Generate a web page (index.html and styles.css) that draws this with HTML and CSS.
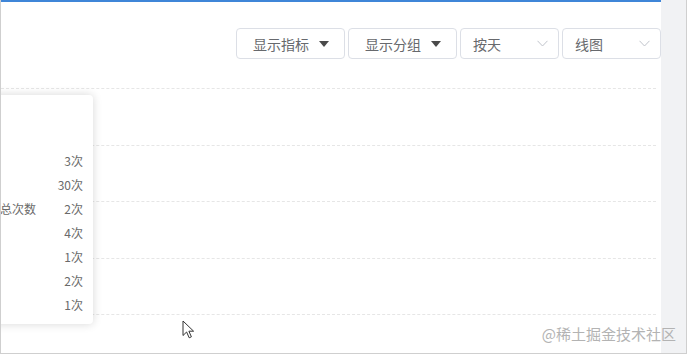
FILE: index.html
```html
<!DOCTYPE html>
<html lang="zh-CN">
  <head>
    <meta charset="UTF-8" />
    <meta name="viewport" content="width=device-width, initial-scale=1.0" />
    <title>统计图表</title>
    <link rel="stylesheet" href="styles.css">
  </head>
  <body>
    <div class="frame">
      <div class="panel">
        <div class="toolbar">
          <button class="drop-btn">
            显示指标
            <span class="caret"></span>
          </button>
          <button class="drop-btn">
            显示分组
            <span class="caret"></span>
          </button>
          <div class="select">
            <span>按天</span>
            <svg class="arrow" width="11" height="7" viewBox="0 0 11 7">
              <path d="M0.5 0.8 L5.5 6 L10.5 0.8" fill="none" stroke="#c0c4cc" stroke-width="1" />
            </svg>
          </div>
          <div class="select">
            <span>线图</span>
            <svg class="arrow" width="11" height="7" viewBox="0 0 11 7">
              <path d="M0.5 0.8 L5.5 6 L10.5 0.8" fill="none" stroke="#c0c4cc" stroke-width="1" />
            </svg>
          </div>
        </div>

        <div class="chart">
          <div class="grid">
            <div class="grid-row"></div>
            <div class="grid-row"></div>
            <div class="grid-row"></div>
            <div class="grid-row"></div>
          </div>

          <!-- 悬浮提示框 -->
          <div class="tooltip">
            <div class="tip-row"><span></span><span>3次</span></div>
            <div class="tip-row"><span></span><span>30次</span></div>
            <div class="tip-row"><span>总次数</span><span>2次</span></div>
            <div class="tip-row"><span></span><span>4次</span></div>
            <div class="tip-row"><span></span><span>1次</span></div>
            <div class="tip-row"><span></span><span>2次</span></div>
            <div class="tip-row"><span></span><span>1次</span></div>
          </div>

          <svg class="cursor" width="13" height="19" viewBox="0 0 13 19">
            <path d="M1 1 L1 15.5 L4.6 12 L7.2 17.8 L9.4 16.8 L6.9 11.2 L11.6 11.2 Z" fill="#fff" stroke="#333" stroke-width="1" stroke-linejoin="round" />
          </svg>
        </div>
      </div>
      <div class="side"></div>
      <div class="watermark">@稀土掘金技术社区</div>
    </div>
  </body>
</html>
```

FILE: styles.css
```css
/* General styles */
body {
  margin: 0;
  background-color: #fff;
  font-family: "Noto Sans CJK SC", "Noto Sans", sans-serif;
}

.frame {
  position: relative;
  display: flex;
  width: 687px;
  height: 354px;
  box-sizing: border-box;
  border: 1px solid #cfcfcf;
  border-top: none;
  overflow: hidden;
}

.panel {
  width: 660px;
  border-top: 2px solid #3f86d8;
  padding-top: 26px;
  background-color: #fff;
}

.side {
  flex: 1;
  background-color: #f1f2f4;
}

/* Toolbar */
.toolbar {
  display: flex;
  justify-content: flex-end;
  gap: 3px;
}

.drop-btn,
.select {
  display: flex;
  align-items: center;
  justify-content: space-between;
  height: 31px;
  box-sizing: border-box;
  border: 1px solid #dcdfe6;
  border-radius: 4px;
  background-color: #fff;
  color: #67696d;
  font-family: "Noto Sans CJK SC", sans-serif;
  font-size: 14px;
}

.drop-btn {
  width: 109px;
  padding: 0 15px 0 16px;
}

.caret {
  width: 0;
  height: 0;
  border-left: 5px solid transparent;
  border-right: 5px solid transparent;
  border-top: 6px solid #4a4a4a;
}

.select {
  width: 99px;
  padding: 0 10px 0 12px;
}

.arrow {
  display: block;
}

/* Chart */
.chart {
  position: relative;
  margin-top: 29px;
  height: 240px;
}

.grid {
  margin-right: 5px;
  border-bottom: 1px dashed #e6e6e6;
}

.grid-row {
  height: 55.5px;
  border-top: 1px dashed #e6e6e6;
}

.tooltip {
  position: absolute;
  left: -11px;
  top: 7px;
  width: 83px;
  padding: 54px 10px 7px 10px;
  background-color: #fff;
  border-radius: 4px;
  box-shadow: 0 0 10px rgba(0, 0, 0, 0.16);
}

.tip-row {
  display: flex;
  justify-content: space-between;
  height: 24px;
  line-height: 24px;
  font-size: 12px;
  color: #6a6a6a;
}

.cursor {
  position: absolute;
  left: 181px;
  top: 232px;
}

.watermark {
  position: absolute;
  right: 10px;
  bottom: 9px;
  font-size: 15px;
  color: #b3b3b3;
}
```
